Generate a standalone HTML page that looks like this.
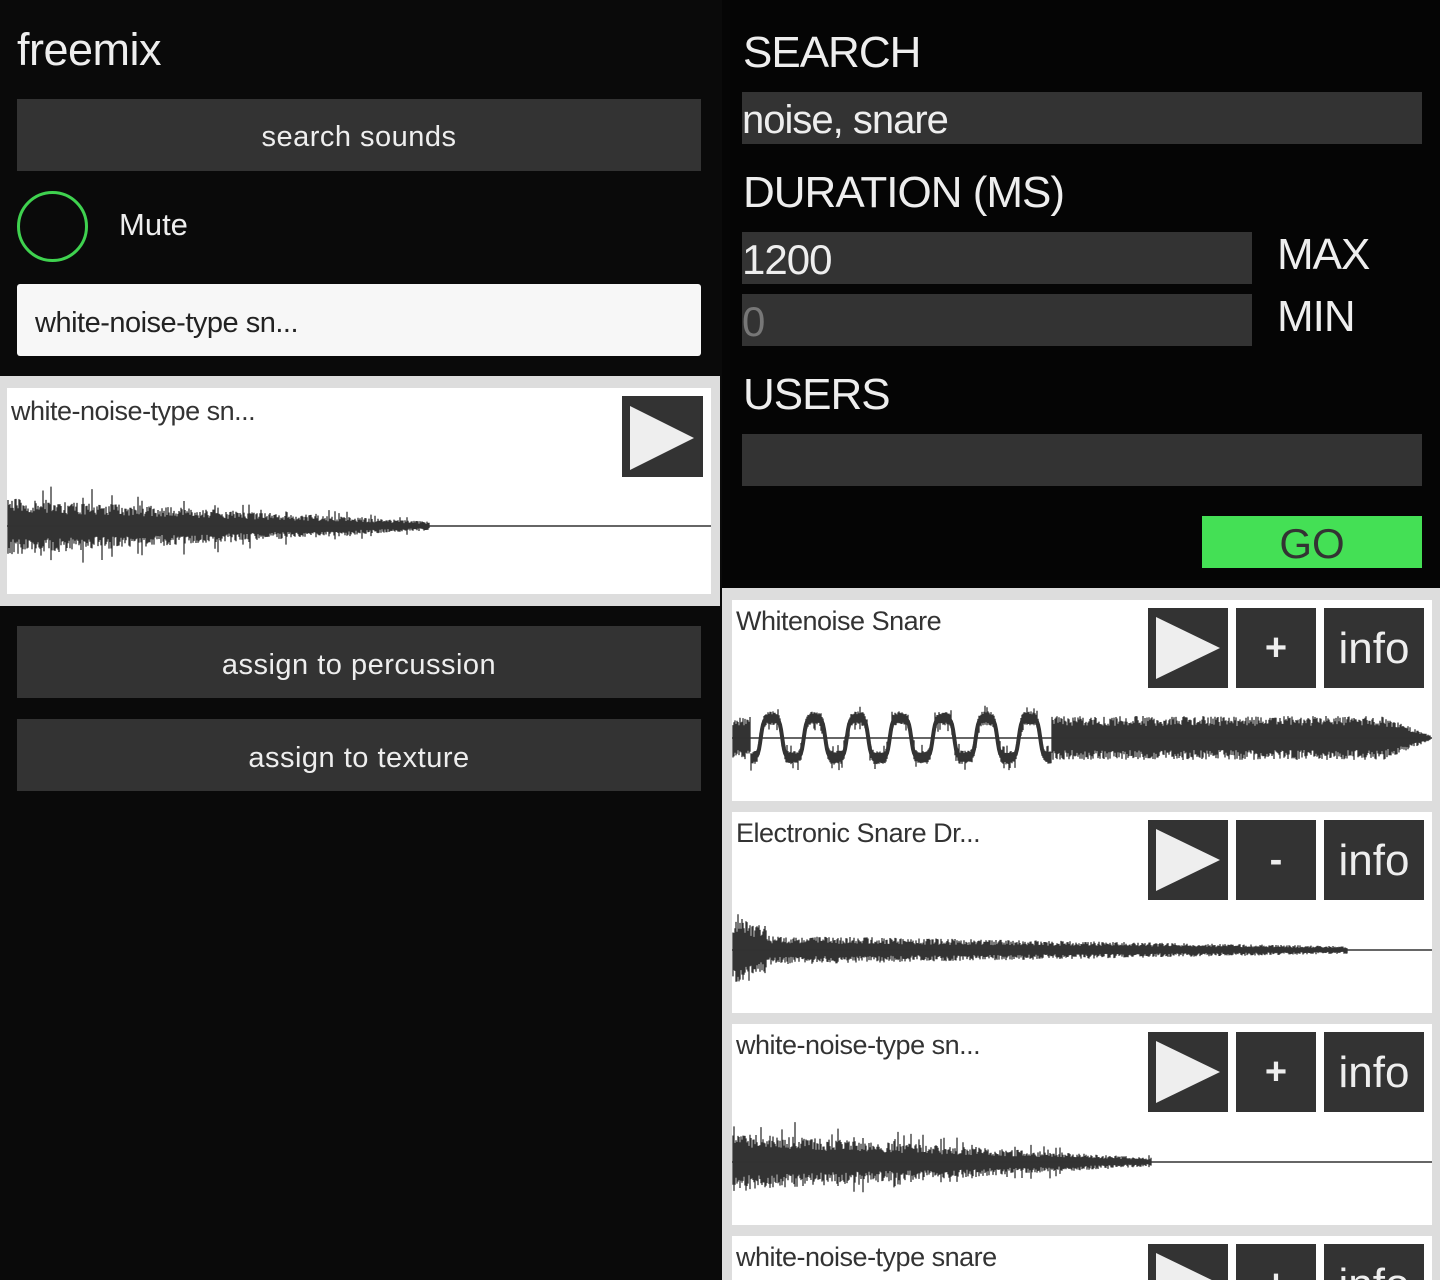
<!DOCTYPE html>
<html><head><meta charset="utf-8">
<style>
*{margin:0;padding:0;box-sizing:border-box}
html,body{width:1440px;height:1280px;overflow:hidden;background:#0a0a0a;font-family:"Liberation Sans",sans-serif}
#root{position:relative;width:1440px;height:1280px;overflow:hidden}
.a{position:absolute}
.btn{position:absolute;background:#333;color:#eee;text-align:center;font-size:29px;letter-spacing:0.5px}
.in{position:absolute;background:#333;color:#eee}
.lbl{position:absolute;color:#eee;font-size:44px;letter-spacing:-1px}
.card{position:absolute;background:#fff;overflow:hidden}
.t{position:absolute;left:4px;top:6px;color:#333;font-size:27px;letter-spacing:-0.5px}
.pb{position:absolute;background:#333}
.pb svg{position:absolute;left:0;top:0}
.sq{position:absolute;background:#333;color:#eee;text-align:center}
</style></head><body><div id="root">
<div class="a" style="left:0;top:0;width:720px;height:1280px;background:#0a0a0a"></div>
<div class="a" style="left:17px;top:24px;color:#eee;font-size:45px;letter-spacing:-0.5px">freemix</div>
<div class="btn" style="left:17px;top:99px;width:684px;height:72px;line-height:76px">search sounds</div>
<div class="a" style="left:17px;top:191px;width:71px;height:71px;border:3px solid #3fd24f;border-radius:50%"></div>
<div class="a" style="left:119px;top:207px;color:#eee;font-size:31px">Mute</div>
<div class="a" style="left:17px;top:284px;width:684px;height:72px;background:#f7f7f7;border-radius:3px;color:#222;font-size:29px;line-height:78px;padding-left:18px;letter-spacing:-0.5px">white-noise-type sn...</div>
<div class="a" style="left:0;top:376px;width:720px;height:230px;background:#ddd"></div>
<div class="card" style="left:7px;top:388px;width:704px;height:206px">
 <div class="t" style="top:8px">white-noise-type sn...</div>
 <div class="pb" style="left:615px;top:8px;width:81px;height:81px"><svg width="81" height="81"><polygon points="8,10 72,42 8,74" fill="#eee"/></svg></div>
 <svg class="a wave" data-type="a" style="left:0;top:88px" width="704" height="100"></svg>
</div>
<div class="btn" style="left:17px;top:626px;width:684px;height:72px;line-height:78px">assign to percussion</div>
<div class="btn" style="left:17px;top:719px;width:684px;height:72px;line-height:78px">assign to texture</div>

<div class="a" style="left:722px;top:0;width:718px;height:588px;background:#050505"></div>
<div class="lbl" style="left:743px;top:28px">SEARCH</div>
<div class="in" style="left:742px;top:92px;width:680px;height:52px;font-size:40px;line-height:56px;letter-spacing:-1px">noise, snare</div>
<div class="lbl" style="left:743px;top:168px">DURATION (MS)</div>
<div class="in" style="left:742px;top:232px;width:510px;height:52px;font-size:42px;line-height:56px;letter-spacing:-1px">1200</div>
<div class="lbl" style="left:1277px;top:230px">MAX</div>
<div class="in" style="left:742px;top:294px;width:510px;height:52px;font-size:42px;line-height:56px;color:#777">0</div>
<div class="lbl" style="left:1277px;top:292px">MIN</div>
<div class="lbl" style="left:743px;top:370px">USERS</div>
<div class="in" style="left:742px;top:434px;width:680px;height:52px"></div>
<div class="a" style="left:1202px;top:516px;width:220px;height:52px;background:#44e055;color:#333;font-size:42px;text-align:center;line-height:56px">GO</div>

<div class="a" style="left:722px;top:588px;width:718px;height:692px;background:#ddd"></div>

<div class="card" style="left:732px;top:600px;width:700px;height:201px">
 <div class="t">Whitenoise Snare</div>
 <div class="pb" style="left:416px;top:8px;width:80px;height:80px"><svg width="80" height="80"><polygon points="8,9 72,40 8,71" fill="#eee"/></svg></div>
 <div class="sq" style="left:504px;top:8px;width:80px;height:80px;font-size:38px;line-height:80px;font-weight:bold">+</div>
 <div class="sq" style="left:592px;top:8px;width:100px;height:80px;font-size:44px;line-height:82px">info</div>
 <svg class="a wave" data-type="b" style="left:0;top:88px" width="700" height="100"></svg>
</div>
<div class="card" style="left:732px;top:812px;width:700px;height:201px">
 <div class="t">Electronic Snare Dr...</div>
 <div class="pb" style="left:416px;top:8px;width:80px;height:80px"><svg width="80" height="80"><polygon points="8,9 72,40 8,71" fill="#eee"/></svg></div>
 <div class="sq" style="left:504px;top:8px;width:80px;height:80px;font-size:38px;line-height:80px;font-weight:bold">-</div>
 <div class="sq" style="left:592px;top:8px;width:100px;height:80px;font-size:44px;line-height:82px">info</div>
 <svg class="a wave" data-type="c" style="left:0;top:88px" width="700" height="100"></svg>
</div>
<div class="card" style="left:732px;top:1024px;width:700px;height:201px">
 <div class="t">white-noise-type sn...</div>
 <div class="pb" style="left:416px;top:8px;width:80px;height:80px"><svg width="80" height="80"><polygon points="8,9 72,40 8,71" fill="#eee"/></svg></div>
 <div class="sq" style="left:504px;top:8px;width:80px;height:80px;font-size:38px;line-height:80px;font-weight:bold">+</div>
 <div class="sq" style="left:592px;top:8px;width:100px;height:80px;font-size:44px;line-height:82px">info</div>
 <svg class="a wave" data-type="a" style="left:0;top:88px" width="700" height="100"></svg>
</div>
<div class="card" style="left:732px;top:1236px;width:700px;height:44px">
 <div class="t">white-noise-type snare</div>
 <div class="pb" style="left:416px;top:8px;width:80px;height:80px"><svg width="80" height="80"><polygon points="8,9 72,40 8,71" fill="#eee"/></svg></div>
 <div class="sq" style="left:504px;top:8px;width:80px;height:80px;font-size:38px;line-height:80px;font-weight:bold">+</div>
 <div class="sq" style="left:592px;top:8px;width:100px;height:80px;font-size:44px;line-height:82px">info</div>
</div>
</div>
<script>
var s=12345;function r(){s=(s*16807)%2147483647;return s/2147483647;}
document.querySelectorAll('svg.wave').forEach(function(sv){
 var W=+sv.getAttribute('width'),c=50,t=sv.getAttribute('data-type'),d='',pl='';
 for(var x=1;x<W-1;x++){
  var f=x/W,amp,up,dn;
  if(t=='a'){amp=f<0.6?(1-f/0.6)*22+4:0.5; if(f<0.6&&r()<0.08)amp*=1.6;
   up=c-amp*(0.5+r()*0.6);dn=c+amp*(0.5+r()*0.6);}
  else if(t=='b'){
   if(x>18&&x<320){
    var v=Math.tanh(2.5*Math.sin((x-18)/43*Math.PI*2+Math.PI/2));
    var y=c+v*20;pl+=x+','+y.toFixed(1)+' ';
    up=y-4-r()*3;dn=y+4+r()*3;
    if(r()<0.1){up-=6;} if(r()<0.1){dn+=6;}
   } else {
    amp=f>0.93?(1-f)/0.07*18+2:20;
    up=c-amp*(0.6+r()*0.5);dn=c+amp*(0.6+r()*0.5);
   }
  }
  else {amp=x<35?35-x*0.4:(f<0.88?(1-f)*12+2:0.5);
   up=c-amp*(0.5+r()*0.6);dn=c+amp*(0.5+r()*0.6);}
  d+='M'+x+' '+up.toFixed(1)+'V'+dn.toFixed(1);
 }
 var extra=pl?'<polyline points="'+pl+'" stroke="#333" stroke-width="4" fill="none"/>':'';
 sv.innerHTML='<path d="'+d+'" stroke="#333" stroke-width="1.3" fill="none"/>'+extra+'<line x1="0" y1="'+c+'" x2="'+W+'" y2="'+c+'" stroke="#333" stroke-width="1.5"/>';
});
</script>
</body></html>
